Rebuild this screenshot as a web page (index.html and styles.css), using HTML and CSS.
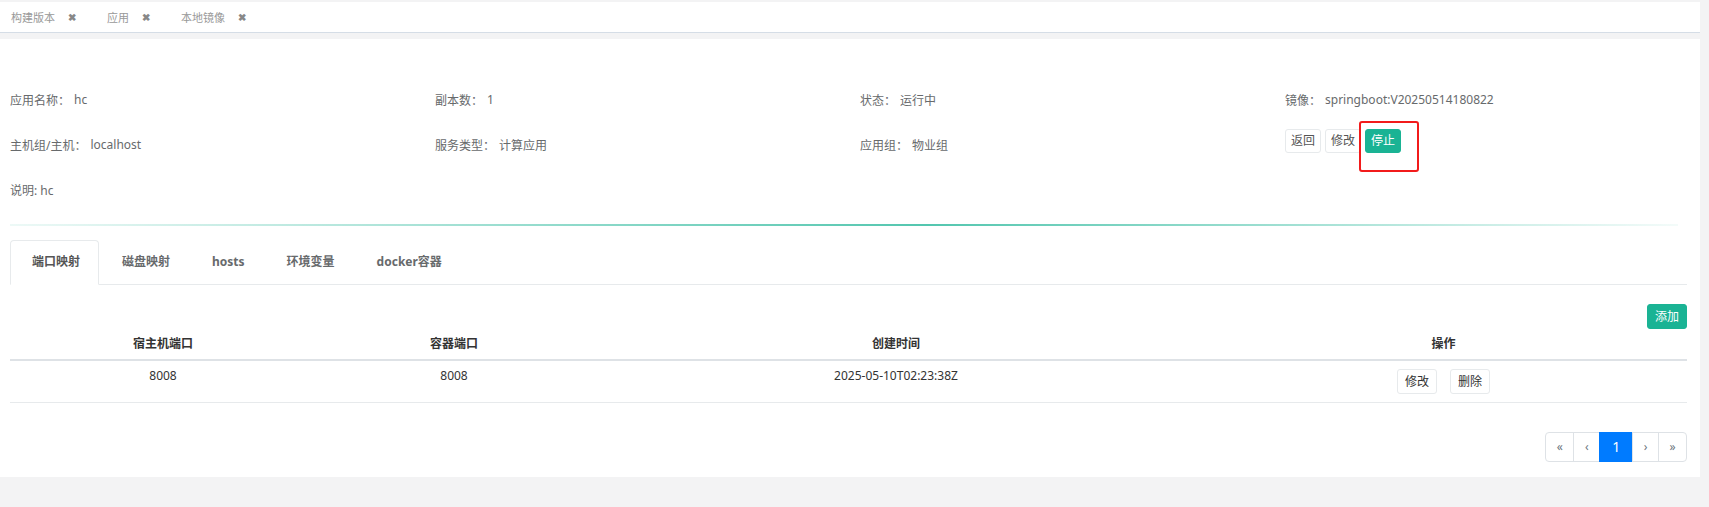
FILE: index.html
```html
<!DOCTYPE html>
<html>
<head>
    <title>应用详情</title>
    <link rel="stylesheet" href="styles.css">
</head>
<body>
    <div class="page-tabs">
        <span class="page-tab">构建版本<span class="tab-close">&#10006;</span></span>
        <span class="page-tab">应用<span class="tab-close">&#10006;</span></span>
        <span class="page-tab">本地镜像<span class="tab-close">&#10006;</span></span>
    </div>

    <div class="ibox">
        <div class="info-grid">
            <div class="info-cell"><span class="info-label">应用名称：</span>hc</div>
            <div class="info-cell"><span class="info-label">副本数：</span>1</div>
            <div class="info-cell"><span class="info-label">状态：</span>运行中</div>
            <div class="info-cell"><span class="info-label">镜像：</span>springboot:V20250514180822</div>

            <div class="info-cell"><span class="info-label">主机组/主机：</span>localhost</div>
            <div class="info-cell"><span class="info-label">服务类型：</span>计算应用</div>
            <div class="info-cell"><span class="info-label">应用组：</span>物业组</div>
            <div class="info-cell info-actions">
                <button class="btn">返回</button>
                <button class="btn">修改</button>
                <button class="btn btn-primary">停止</button>
            </div>

            <div class="info-cell">说明: hc</div>
        </div>

        <div class="divider"></div>

        <div class="content">
            <ul class="nav-tabs">
                <li class="nav-tab active">端口映射</li>
                <li class="nav-tab">磁盘映射</li>
                <li class="nav-tab">hosts</li>
                <li class="nav-tab">环境变量</li>
                <li class="nav-tab">docker容器</li>
            </ul>

            <div class="toolbar">
                <button class="btn btn-primary btn-add">添加</button>
            </div>

            <table class="port-table">
                <thead>
                    <tr>
                        <th class="col-host">宿主机端口</th>
                        <th class="col-container">容器端口</th>
                        <th class="col-time">创建时间</th>
                        <th>操作</th>
                    </tr>
                </thead>
                <tbody>
                    <tr>
                        <td>8008</td>
                        <td>8008</td>
                        <td>2025-05-10T02:23:38Z</td>
                        <td>
                            <button class="btn btn-row">修改</button>
                            <button class="btn btn-row">删除</button>
                        </td>
                    </tr>
                </tbody>
            </table>

            <div class="pager">
                <ul class="pagination">
                    <li class="page-item">&laquo;</li>
                    <li class="page-item">&lsaquo;</li>
                    <li class="page-item active">1</li>
                    <li class="page-item">&rsaquo;</li>
                    <li class="page-item">&raquo;</li>
                </ul>
            </div>
        </div>
    </div>

    <div class="mark"></div>
</body>
</html>
```

FILE: styles.css
```css
body {
    margin: 0;
    background-color: #f3f3f4;
    font-family: "Noto Sans", "Noto Sans CJK SC", sans-serif;
    font-size: 12px;
    color: #676a6c;
}
.page-tabs {
    width: 1700px;
    height: 31px;
    margin-top: 2px;
    padding-left: 11px;
    box-sizing: border-box;
    background: #ffffff;
    border-bottom: 1px solid #d5dde6;
    display: flex;
    align-items: center;
    font-size: 11px;
}
.page-tab {
    color: #999;
    margin-right: 31px;
    display: flex;
    align-items: center;
}
.tab-close {
    margin-left: 13px;
    font-size: 10px;
    font-weight: bold;
    color: #888;
}
.ibox {
    width: 1700px;
    margin-top: 6px;
    padding: 38px 0 15px 0;
    background: #ffffff;
}
.info-grid {
    display: grid;
    grid-template-columns: repeat(4, 425px);
    grid-auto-rows: 45px;
    padding-left: 10px;
}
.info-cell {
    display: flex;
    align-items: center;
    color: #676a6c;
}
.info-label {
    margin-right: 4px;
}
.info-actions {
    align-items: flex-start;
    padding-top: 7px;
    gap: 4px;
}
.btn {
    height: 24px;
    padding: 0 5px;
    font-family: inherit;
    font-size: 12px;
    line-height: 22px;
    color: #555;
    background: #ffffff;
    border: 1px solid #e7eaec;
    border-radius: 3px;
    cursor: pointer;
}
.btn-primary {
    background: #1ab394;
    border-color: #1ab394;
    color: #ffffff;
}
.divider {
    height: 2px;
    margin: 12px 22px 0 10px;
    background: linear-gradient(to right, rgba(26, 179, 148, 0.08), rgba(26, 179, 148, 0.75) 55%, rgba(26, 179, 148, 0.05));
}
.content {
    padding: 0 13px 0 10px;
}
.nav-tabs {
    list-style: none;
    margin: 14px 0 0 0;
    padding: 0;
    display: flex;
    border-bottom: 1px solid #e7eaec;
}
.nav-tab {
    height: 43px;
    line-height: 42px;
    padding: 0 18px 0 21px;
    margin-right: 1px;
    margin-bottom: -1px;
    border: 1px solid transparent;
    border-radius: 4px 4px 0 0;
    font-weight: bold;
    color: #676a6c;
}
.nav-tab.active {
    border-color: #e7eaec;
    border-bottom-color: #ffffff;
    background: #ffffff;
    color: #555;
}
.toolbar {
    display: flex;
    justify-content: flex-end;
    margin-top: 19px;
}
.btn-add {
    height: 25px;
    padding: 0 7px;
}
.port-table {
    width: 100%;
    border-collapse: collapse;
    margin-top: 1px;
    color: #333;
}
.port-table th {
    padding: 5px 8px 6px;
    line-height: 18px;
    text-align: center;
    font-weight: bold;
    border-bottom: 2px solid #dee2e6;
}
.port-table td {
    padding: 6px 8px 8px;
    line-height: 18px;
    text-align: center;
    vertical-align: top;
    border-bottom: 1px solid #e7eaec;
}
.col-host {
    width: 290px;
}
.col-container {
    width: 260px;
}
.col-time {
    width: 592px;
}
.btn-row {
    height: 25px;
    padding: 0 7px;
    margin: 2px 5px 0;
    color: #333;
}
.pager {
    display: flex;
    justify-content: flex-end;
    margin-top: 29px;
}
.pagination {
    list-style: none;
    margin: 0;
    padding: 0;
    display: flex;
}
.page-item {
    height: 28px;
    line-height: 28px;
    padding: 0 10.5px;
    border: 1px solid #dee2e6;
    margin-left: -1px;
    color: #6c757d;
    font-size: 12px;
}
.page-item:first-child {
    border-radius: 4px 0 0 4px;
}
.page-item:last-child {
    border-radius: 0 4px 4px 0;
}
.page-item.active {
    background: #007bff;
    border-color: #007bff;
    color: #ffffff;
    font-size: 14px;
    padding: 0 12px;
}
.mark {
    position: absolute;
    left: 1359px;
    top: 121px;
    width: 56px;
    height: 47px;
    border: 2px solid #f21b1b;
    border-radius: 3px;
}
```
